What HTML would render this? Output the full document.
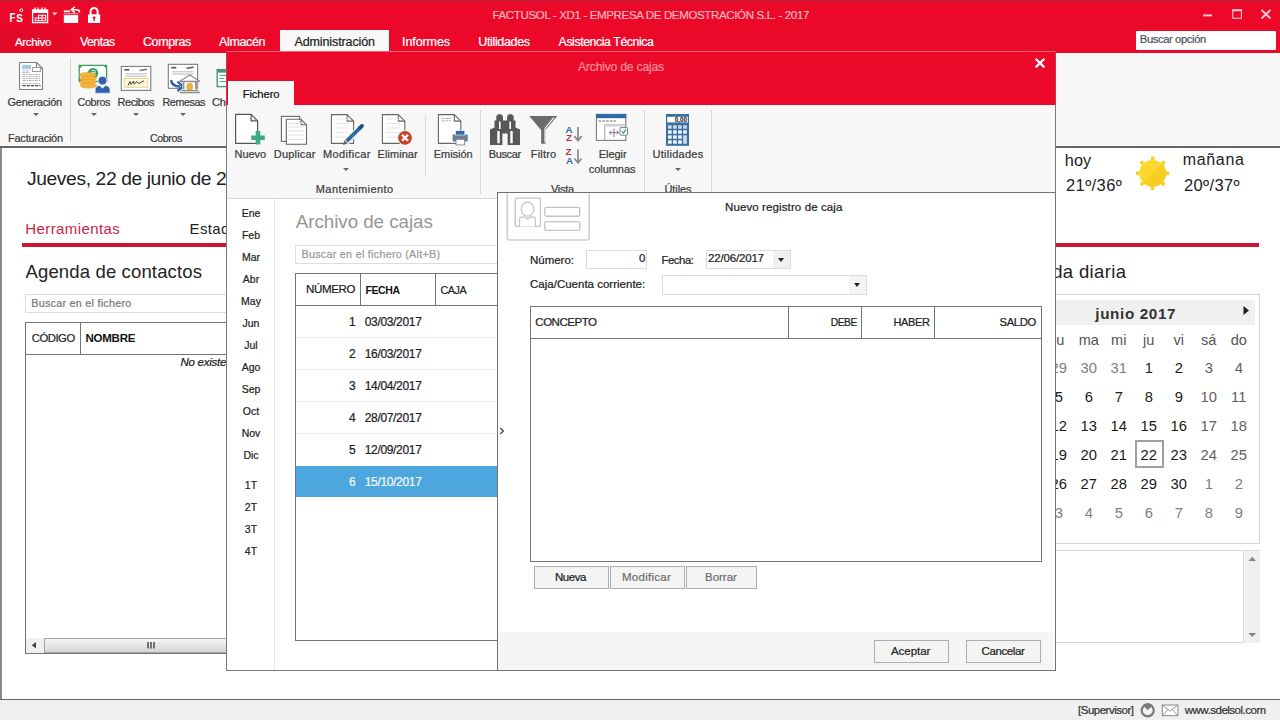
<!DOCTYPE html>
<html lang="es"><head><meta charset="utf-8"><title>FACTUSOL</title>
<style>
*{box-sizing:border-box;margin:0;padding:0}
html,body{width:1280px;height:720px;overflow:hidden;background:#fff}
body{font-family:"Liberation Sans",sans-serif;font-size:12px;color:#222;position:relative}
.a{position:absolute}
.t{position:absolute;white-space:nowrap;line-height:1;-webkit-text-stroke:0.22px currentColor}
.L{position:absolute;left:0;top:0;width:1280px;height:720px;overflow:hidden}
.arr{position:absolute;width:0;height:0;border-left:3px solid transparent;border-right:3px solid transparent;border-top:3px solid #666}
.btn{position:absolute;background:#f4f4f4;border:1px solid #adadad}
svg{position:absolute;overflow:visible}
</style></head><body>

<!-- ===== layer 0: main window ===== -->
<div class="L">
<div class="a" style="left:0;top:52px;width:1280px;height:95px;background:#f7f7f7"></div>
<div class="a" style="left:0;top:0;width:1280px;height:52.6px;background:#ec0829"></div>
<div class="a" style="left:0;top:0;width:1280px;height:1px;background:#b8203a"></div>
<div class="a" style="left:0;top:1px;width:1280px;height:1px;background:#dc0c2a"></div>
<div class="a" style="left:0;top:30px;width:66px;height:22px;background:#e30a28"></div>
<div class="a" style="left:280px;top:30px;width:108.7px;height:22px;background:#f8f8f8"></div>
<div class="a" style="left:1136px;top:30.5px;width:140.3px;height:19px;background:#fff;border-radius:1px"></div>
<div class="a" style="left:70px;top:58px;width:1px;height:84px;background:#d4d4d4"></div>
<div class="a" style="left:0;top:146.4px;width:1280px;height:1.6px;background:#666"></div>
<div class="a" style="left:0;top:148px;width:2px;height:552px;background:#8a8a8a"></div>
<div class="arr" style="left:32.5px;top:113px"></div>
<div class="arr" style="left:91px;top:113px"></div>
<div class="arr" style="left:133px;top:113px"></div>
<div class="arr" style="left:180px;top:113px"></div>
<!-- red rule -->
<div class="a" style="left:22px;top:243px;width:1237px;height:4px;background:#cd1432"></div>
<!-- left search + table -->
<div class="a" style="left:25px;top:294px;width:300px;height:19px;border:1px solid #dcdcdc;background:#fff"></div>
<div class="a" style="left:25px;top:322px;width:300px;height:332px;border:1px solid #747474;background:#fff"></div>
<div class="a" style="left:25px;top:354px;width:300px;height:1px;background:#747474"></div>
<div class="a" style="left:80px;top:323px;width:1px;height:31px;background:#747474"></div>
<div class="a" style="left:26px;top:638px;width:298px;height:15px;background:#f0f0f0"></div>
<div class="a" style="left:44px;top:638px;width:260px;height:15px;background:linear-gradient(#f7f7f7,#e6e6e6 45%,#d6d6d6);border:1px solid #a4a4a4"></div>
<!-- right: calendar -->
<div class="a" style="left:1000px;top:296px;width:1260px;height:0"></div>
<div class="a" style="left:1040px;top:300px;width:215px;height:25px;background:#f0f0f0"></div>
<div class="a" style="left:1030px;top:294px;width:230px;height:250px;border:1px solid #d6d6d6"></div>
<div class="a" style="left:1135px;top:440px;width:29px;height:28px;border:2px solid #a0a0a0"></div>
<div class="a" style="left:1030px;top:550px;width:229.5px;height:93px;border:1px solid #d8d8d8;border-right:none"></div><div class="a" style="left:1243px;top:551px;width:1px;height:91px;background:#dcdcdc"></div>
<div class="a" style="left:1244px;top:551px;width:15.5px;height:91.5px;background:#f0f0f0"></div>
<!-- status bar -->
<div class="a" style="left:0;top:699px;width:1280px;height:21px;background:#f0f0f0;border-top:1px solid #666"></div>
<svg width="1280" height="720" viewBox="0 0 1280 720" style="left:0;top:0">
<text x="9.4" y="21.8" font-family="Liberation Sans,sans-serif" font-size="13" font-weight="bold" fill="#fff" textLength="5.8" lengthAdjust="spacingAndGlyphs">F</text>
<text x="16.3" y="22.2" font-family="Liberation Sans,sans-serif" font-size="11.5" font-weight="bold" fill="#fff" textLength="6.6" lengthAdjust="spacingAndGlyphs">S</text>
<circle cx="21.4" cy="10.2" r="1.4" fill="none" stroke="#fff" stroke-width="1"/>
<rect x="32.6" y="10" width="15" height="12.6" fill="none" stroke="#fff" stroke-width="1.3"/>
<rect x="32.6" y="10" width="15" height="3" fill="#fff"/>
<path d="M35 7.5V11M38 7.5V11M42 7.5V11M45 7.5V11" stroke="#fff" stroke-width="1.2"/>
<path d="M38.5 15.2H45.7V20.8H35.2V18H38.5ZM42 15.2V20.8M38.5 18V20.8M38.5 18H45.7" fill="none" stroke="#fff" stroke-width="1.1"/>
<path d="M52 12.6H57.4L54.7 15.6Z" fill="#fbd0d4"/>
<path d="M63.8 13.5H78.2V23H63.8Z" fill="#fff"/><path d="M63.8 10.5H70V12.2H63.8Z" fill="#fff"/><path d="M63.8 14.6H78.2" stroke="#ec0829" stroke-width="0.9"/>
<path d="M72.5 9.8H77Q79.5 9.8 79.5 12.5" fill="none" stroke="#fff" stroke-width="1.5"/><path d="M74.8 6.8L71.3 9.8L74.8 12.6" fill="none" stroke="#fff" stroke-width="1.5"/>
<rect x="88" y="14.3" width="12.2" height="8.8" rx="0.8" fill="#fff"/>
<path d="M90.6 14.5V11.5A3.5 3.6 0 0 1 97.6 11.5V14.5" fill="none" stroke="#fff" stroke-width="2"/>
<path d="M94.1 16L96.2 18.3H94.8V21H93.4V18.3H92Z" fill="#c8102e"/>
<path d="M1203 15.4H1212" stroke="#f9c6cb" stroke-width="2"/>
<rect x="1232.8" y="10.3" width="8.6" height="8" fill="none" stroke="#f9c6cb" stroke-width="1.1"/><path d="M1232.3 10.2H1241.9" stroke="#f9c6cb" stroke-width="2.2"/>
<path d="M1261.5 10L1270.5 18.5M1270.5 10L1261.5 18.5" stroke="#f9c6cb" stroke-width="2"/>
<path d="M19.5 62.5H36.5L42.5 68.5V89.5H19.5Z" fill="#fff" stroke="#808080" stroke-width="1.1" stroke-linejoin="round"/><path d="M36.5 62.5V68.5H42.5" fill="none" stroke="#808080" stroke-width="1.1" stroke-linejoin="round"/>
<rect x="22" y="65" width="9" height="4.2" fill="#9ecbe8"/>
<rect x="32.3" y="67.6" width="8" height="4" fill="#fff" stroke="#8a8a8a" stroke-width="0.8"/>
<path d="M22.5 70.8H30M22.5 72.6H30" stroke="#9a9a9a" stroke-width="0.8" stroke-dasharray="2.5 1"/>
<path d="M22.5 74.6H40.5M22.5 76.6H40.5M22.5 78.6H40.5M22.5 80.6H40.5M22.5 83.4H40.5" stroke="#9a9a9a" stroke-width="0.8" stroke-dasharray="3 0.8 1.5 0.8"/>
<path d="M22.5 85.6H40.5" stroke="#444" stroke-width="1.1" stroke-dasharray="3.2 1"/>
<rect x="79.2" y="65.4" width="27.4" height="16" fill="#fff" stroke="#3f9b63" stroke-width="1.3"/>
<path d="M79 65.2h4l-4 4ZM107 65.2h-4l4 4ZM79 81.7h4l-4 -4Z" fill="#3f9b63"/>
<circle cx="93" cy="73.2" r="5.2" fill="#2f9e5e"/><path d="M91.5 70.5H95V76M91 72.5H95M91 74.5H95" stroke="#e8f5ec" stroke-width="0.9" fill="none"/>
<ellipse cx="87.5" cy="75" rx="8.2" ry="2.6" fill="#f2b43c" stroke="#e09a1e" stroke-width="0.6"/>
<ellipse cx="88.5" cy="78.5" rx="8.2" ry="2.6" fill="#f2b43c" stroke="#e09a1e" stroke-width="0.6"/>
<ellipse cx="87.5" cy="82" rx="8.2" ry="2.6" fill="#f2b43c" stroke="#e09a1e" stroke-width="0.6"/>
<ellipse cx="88.5" cy="85.5" rx="8.2" ry="2.6" fill="#f2b43c" stroke="#e09a1e" stroke-width="0.6"/>
<circle cx="102.5" cy="80.6" r="4.4" fill="#2f62a8" stroke="#f7f7f7" stroke-width="0.8"/>
<path d="M95.2 93.2V90Q95.2 86 99.5 85.5L102.5 88.2L105.5 85.5Q110 86 110 90V93.2Z" fill="#2f62a8" stroke="#f7f7f7" stroke-width="0.6"/>
<rect x="121.3" y="66.4" width="29.5" height="24" fill="#fff" stroke="#7c7c7c" stroke-width="1.1"/><path d="M124.3 69.80000000000001H129.3" stroke="#555" stroke-width="1.6"/><path d="M139.8 70.4L146.8 69.4" stroke="#555" stroke-width="1.4"/><path d="M125.3 73.9H146.8M125.3 76.2H146.8" stroke="#9a9a9a" stroke-width="0.7"/>
<rect x="124.3" y="78.3" width="23.5" height="9" fill="#fdf6d8" stroke="#e8cf7a" stroke-width="0.8"/>
<path d="M128 85.5L130 81.5L131 84.5L133.5 81L134 84L137 81.5L138.5 83.5L144 80.8" fill="none" stroke="#333" stroke-width="0.9"/>
<rect x="168.3" y="64.3" width="29.3" height="24" fill="#fff" stroke="#7c7c7c" stroke-width="1.1"/><path d="M171.3 67.7H176.3" stroke="#555" stroke-width="1.6"/><path d="M186.60000000000002 68.3L193.60000000000002 67.3" stroke="#555" stroke-width="1.4"/><path d="M172.3 71.8H193.60000000000002M172.3 74.1H193.60000000000002" stroke="#9a9a9a" stroke-width="0.7"/>
<path d="M171 80Q172 86.5 180 86.5" fill="none" stroke="#2f62a8" stroke-width="2.4"/><path d="M177.5 81.5L182.8 86.5L177.5 91.2" fill="none" stroke="#2f62a8" stroke-width="2.4"/>
<path d="M180 92.4H199.8M181.5 90.2H198.3" stroke="#8a8a8a" stroke-width="1.5"/>
<path d="M179.8 81.2L189.8 75L199.8 81.2Z" fill="#fff" stroke="#8a8a8a" stroke-width="1.1" stroke-linejoin="round"/>
<rect x="182.3" y="82" width="15" height="8" fill="#fff"/>
<path d="M183.5 82V89.5M196 82V89.5" stroke="#9a9a9a" stroke-width="2"/>
<rect x="187" y="83.5" width="5.4" height="6.5" rx="1.6" fill="#e3b94a" stroke="#c89a2e" stroke-width="0.7"/>
<path d="M181 81.6H198.6" stroke="#8a8a8a" stroke-width="1.1"/>
<rect x="217.2" y="69.6" width="22" height="17" fill="#fff" stroke="#4a9a78" stroke-width="1.4"/><rect x="217.2" y="69.6" width="22" height="3" fill="#4a9a78"/>
<path d="M219.5 75.5H226M219.5 78.5H224M219.5 81.5H226" stroke="#4a9a78" stroke-width="0.9"/>
<path d="M36 642L31.8 645.3L36 648.6Z" fill="#444"/>
<path d="M148 642V648.4M151 642V648.4M154 642V648.4" stroke="#555" stroke-width="1.6"/>
<path d="M1243.5 306L1249 310.5L1243.5 315Z" fill="#222"/>
<path d="M1248.4 561L1252.2 556.8L1256 561Z" fill="#858585"/><path d="M1248.4 632.9L1252.2 637.1L1256 632.9Z" fill="#858585"/>
<rect x="1165.70" y="171.50" width="3.6" height="3.6" fill="#f7cf2a" transform="rotate(0.0 1167.50 173.30)"/><rect x="1161.34" y="182.04" width="3.6" height="3.6" fill="#f7cf2a" transform="rotate(45.0 1163.14 183.84)"/><rect x="1150.80" y="186.40" width="3.6" height="3.6" fill="#f7cf2a" transform="rotate(90.0 1152.60 188.20)"/><rect x="1140.26" y="182.04" width="3.6" height="3.6" fill="#f7cf2a" transform="rotate(135.0 1142.06 183.84)"/><rect x="1135.90" y="171.50" width="3.6" height="3.6" fill="#f7cf2a" transform="rotate(180.0 1137.70 173.30)"/><rect x="1140.26" y="160.96" width="3.6" height="3.6" fill="#f7cf2a" transform="rotate(225.0 1142.06 162.76)"/><rect x="1150.80" y="156.60" width="3.6" height="3.6" fill="#f7cf2a" transform="rotate(270.0 1152.60 158.40)"/><rect x="1161.34" y="160.96" width="3.6" height="3.6" fill="#f7cf2a" transform="rotate(315.0 1163.14 162.76)"/>
<circle cx="1152.6" cy="173.3" r="13.4" fill="#fbd82e"/>
<path d="M1162.1 163.8A13.4 13.4 0 0 1 1143.1 182.8Z" fill="#f6cd22"/>
<circle cx="1147.7" cy="710.4" r="6" fill="#f0f0f0" stroke="#7a7a7a" stroke-width="2.2"/>
<path d="M1142.6 705.2Q1147.7 701.2 1152.8 705.2L1147.7 710Z" fill="#7a7a7a"/>
<path d="M1143.5 704L1147.7 708.5L1152 704" fill="none" stroke="#f0f0f0" stroke-width="0"/>
<rect x="1162.3" y="705" width="15.6" height="10.6" fill="#fff" stroke="#8a8a8a" stroke-width="1"/><path d="M1162.3 705L1170.1 711L1177.9 705M1162.3 715.6L1168 709.5M1177.9 715.6L1172.2 709.5" fill="none" stroke="#8a8a8a" stroke-width="0.9"/>
</svg>
<div class="t" style="left:492.50px;top:10.27px;font-size:11.5px;color:#f6b6bc;letter-spacing:-0.345px;">FACTUSOL - XD1 - EMPRESA DE DEMOSTRACIÓN S.L. - 2017</div>
<div class="t" style="left:15.00px;top:36.87px;font-size:11.5px;color:#fff;letter-spacing:-0.325px;">Archivo</div>
<div class="t" style="left:80.00px;top:36.23px;font-size:12.25px;color:#fff;letter-spacing:-0.467px;">Ventas</div>
<div class="t" style="left:143.00px;top:36.02px;font-size:12.5px;color:#fff;letter-spacing:-0.410px;">Compras</div>
<div class="t" style="left:219.00px;top:36.02px;font-size:12.5px;color:#fff;letter-spacing:-0.363px;">Almacén</div>
<div class="t" style="left:294.50px;top:36.02px;font-size:12.5px;color:#222;letter-spacing:-0.117px;">Administración</div>
<div class="t" style="left:402.00px;top:36.02px;font-size:12.5px;color:#fff;letter-spacing:-0.082px;">Informes</div>
<div class="t" style="left:478.20px;top:36.02px;font-size:12.5px;color:#fff;letter-spacing:-0.338px;">Utilidades</div>
<div class="t" style="left:558.60px;top:36.23px;font-size:12.25px;color:#fff;letter-spacing:-0.389px;">Asistencia Técnica</div>
<div class="t" style="left:1139.80px;top:34.28px;font-size:11.25px;color:#4a5560;letter-spacing:-0.403px;">Buscar opción</div>
<div class="t" style="left:7.50px;top:96.69px;font-size:11px;color:#3a3a3a;letter-spacing:-0.250px;">Generación</div>
<div class="t" style="left:77.50px;top:96.90px;font-size:10.75px;color:#3a3a3a;letter-spacing:-0.356px;">Cobros</div>
<div class="t" style="left:117.50px;top:96.69px;font-size:11px;color:#3a3a3a;letter-spacing:-0.457px;">Recibos</div>
<div class="t" style="left:162.50px;top:96.90px;font-size:10.75px;color:#3a3a3a;letter-spacing:-0.422px;">Remesas</div>
<div class="t" style="left:212.00px;top:96.69px;font-size:11px;color:#3a3a3a;letter-spacing:-0.255px;">Cheques</div>
<div class="t" style="left:8.00px;top:132.69px;font-size:11px;color:#3a3a3a;letter-spacing:-0.235px;">Facturación</div>
<div class="t" style="left:150.00px;top:132.90px;font-size:10.75px;color:#3a3a3a;letter-spacing:-0.456px;">Cobros</div>
<div class="t" style="left:27.00px;top:168.70px;font-size:19.25px;color:#222;letter-spacing:-0.391px;-webkit-text-stroke:0;">Jueves, 22 de junio de 2017</div>
<div class="t" style="left:25.25px;top:221.30px;font-size:15px;color:#cb1f45;letter-spacing:0.402px;-webkit-text-stroke:0;">Herramientas</div>
<div class="t" style="left:189.60px;top:221.30px;font-size:15px;color:#222;letter-spacing:0.346px;-webkit-text-stroke:0;">Estado</div>
<div class="t" style="left:25.50px;top:262.74px;font-size:18.5px;color:#222;letter-spacing:0.146px;-webkit-text-stroke:0;">Agenda de contactos</div>
<div class="t" style="left:1007.62px;top:262.74px;font-size:18.5px;color:#222;letter-spacing:0.350px;-webkit-text-stroke:0;">Agenda diaria</div>
<div class="t" style="left:31.30px;top:297.90px;font-size:10.75px;color:#777;letter-spacing:0.262px;">Buscar en el fichero</div>
<div class="t" style="left:31.70px;top:333.48px;font-size:11.25px;color:#222;letter-spacing:-0.435px;">CÓDIGO</div>
<div class="t" style="left:85.40px;top:333.27px;font-size:11.5px;color:#111;letter-spacing:-0.208px;font-weight:bold;-webkit-text-stroke:0;">NOMBRE</div>
<div class="t" style="left:180.40px;top:357.07px;font-size:11.5px;color:#222;letter-spacing:-0.243px;font-style:italic;">No existen registros</div>
<div class="t" style="left:1064.80px;top:152.04px;font-size:16.25px;color:#222;letter-spacing:0.063px;-webkit-text-stroke:0;">hoy</div>
<div class="t" style="left:1066.00px;top:177.03px;font-size:16.5px;color:#222;letter-spacing:0.397px;-webkit-text-stroke:0;">21º/36º</div>
<div class="t" style="left:1182.75px;top:152.26px;font-size:16px;color:#222;letter-spacing:0.666px;-webkit-text-stroke:0;">mañana</div>
<div class="t" style="left:1184.00px;top:177.03px;font-size:16.5px;color:#222;letter-spacing:0.381px;-webkit-text-stroke:0;">20º/37º</div>
<div class="t" style="left:1095.30px;top:306.09px;font-size:15.25px;color:#333;letter-spacing:0.622px;font-weight:bold;-webkit-text-stroke:0;">junio 2017</div>
<div class="t" style="left:1053.11px;top:332.73px;font-size:14.5px;color:#555;-webkit-text-stroke:0;">lu</div>
<div class="t" style="left:1078.68px;top:332.73px;font-size:14.5px;color:#555;-webkit-text-stroke:0;">ma</div>
<div class="t" style="left:1111.10px;top:332.73px;font-size:14.5px;color:#555;-webkit-text-stroke:0;">mi</div>
<div class="t" style="left:1143.11px;top:332.73px;font-size:14.5px;color:#555;-webkit-text-stroke:0;">ju</div>
<div class="t" style="left:1173.51px;top:332.73px;font-size:14.5px;color:#555;-webkit-text-stroke:0;">vi</div>
<div class="t" style="left:1201.09px;top:332.73px;font-size:14.5px;color:#555;-webkit-text-stroke:0;">sá</div>
<div class="t" style="left:1230.69px;top:332.73px;font-size:14.5px;color:#555;-webkit-text-stroke:0;">do</div>
<div class="t" style="left:1050.55px;top:361.31px;font-size:14.75px;color:#808080;-webkit-text-stroke:0;">29</div>
<div class="t" style="left:1080.55px;top:361.31px;font-size:14.75px;color:#808080;-webkit-text-stroke:0;">30</div>
<div class="t" style="left:1110.55px;top:361.31px;font-size:14.75px;color:#808080;-webkit-text-stroke:0;">31</div>
<div class="t" style="left:1144.65px;top:361.31px;font-size:14.75px;color:#1a1a1a;-webkit-text-stroke:0;">1</div>
<div class="t" style="left:1174.65px;top:361.31px;font-size:14.75px;color:#1a1a1a;-webkit-text-stroke:0;">2</div>
<div class="t" style="left:1204.65px;top:361.31px;font-size:14.75px;color:#606060;-webkit-text-stroke:0;">3</div>
<div class="t" style="left:1234.65px;top:361.31px;font-size:14.75px;color:#606060;-webkit-text-stroke:0;">4</div>
<div class="t" style="left:1054.65px;top:390.31px;font-size:14.75px;color:#1a1a1a;-webkit-text-stroke:0;">5</div>
<div class="t" style="left:1084.65px;top:390.31px;font-size:14.75px;color:#1a1a1a;-webkit-text-stroke:0;">6</div>
<div class="t" style="left:1114.65px;top:390.31px;font-size:14.75px;color:#1a1a1a;-webkit-text-stroke:0;">7</div>
<div class="t" style="left:1144.65px;top:390.31px;font-size:14.75px;color:#1a1a1a;-webkit-text-stroke:0;">8</div>
<div class="t" style="left:1174.65px;top:390.31px;font-size:14.75px;color:#1a1a1a;-webkit-text-stroke:0;">9</div>
<div class="t" style="left:1200.55px;top:390.31px;font-size:14.75px;color:#606060;-webkit-text-stroke:0;">10</div>
<div class="t" style="left:1231.09px;top:390.31px;font-size:14.75px;color:#606060;-webkit-text-stroke:0;">11</div>
<div class="t" style="left:1050.55px;top:419.31px;font-size:14.75px;color:#1a1a1a;-webkit-text-stroke:0;">12</div>
<div class="t" style="left:1080.55px;top:419.31px;font-size:14.75px;color:#1a1a1a;-webkit-text-stroke:0;">13</div>
<div class="t" style="left:1110.55px;top:419.31px;font-size:14.75px;color:#1a1a1a;-webkit-text-stroke:0;">14</div>
<div class="t" style="left:1140.55px;top:419.31px;font-size:14.75px;color:#1a1a1a;-webkit-text-stroke:0;">15</div>
<div class="t" style="left:1170.55px;top:419.31px;font-size:14.75px;color:#1a1a1a;-webkit-text-stroke:0;">16</div>
<div class="t" style="left:1200.55px;top:419.31px;font-size:14.75px;color:#606060;-webkit-text-stroke:0;">17</div>
<div class="t" style="left:1230.55px;top:419.31px;font-size:14.75px;color:#606060;-webkit-text-stroke:0;">18</div>
<div class="t" style="left:1050.55px;top:448.31px;font-size:14.75px;color:#1a1a1a;-webkit-text-stroke:0;">19</div>
<div class="t" style="left:1080.55px;top:448.31px;font-size:14.75px;color:#1a1a1a;-webkit-text-stroke:0;">20</div>
<div class="t" style="left:1110.55px;top:448.31px;font-size:14.75px;color:#1a1a1a;-webkit-text-stroke:0;">21</div>
<div class="t" style="left:1140.55px;top:448.31px;font-size:14.75px;color:#1a1a1a;-webkit-text-stroke:0;">22</div>
<div class="t" style="left:1170.55px;top:448.31px;font-size:14.75px;color:#1a1a1a;-webkit-text-stroke:0;">23</div>
<div class="t" style="left:1200.55px;top:448.31px;font-size:14.75px;color:#606060;-webkit-text-stroke:0;">24</div>
<div class="t" style="left:1230.55px;top:448.31px;font-size:14.75px;color:#606060;-webkit-text-stroke:0;">25</div>
<div class="t" style="left:1050.55px;top:477.31px;font-size:14.75px;color:#1a1a1a;-webkit-text-stroke:0;">26</div>
<div class="t" style="left:1080.55px;top:477.31px;font-size:14.75px;color:#1a1a1a;-webkit-text-stroke:0;">27</div>
<div class="t" style="left:1110.55px;top:477.31px;font-size:14.75px;color:#1a1a1a;-webkit-text-stroke:0;">28</div>
<div class="t" style="left:1140.55px;top:477.31px;font-size:14.75px;color:#1a1a1a;-webkit-text-stroke:0;">29</div>
<div class="t" style="left:1170.55px;top:477.31px;font-size:14.75px;color:#1a1a1a;-webkit-text-stroke:0;">30</div>
<div class="t" style="left:1204.65px;top:477.31px;font-size:14.75px;color:#808080;-webkit-text-stroke:0;">1</div>
<div class="t" style="left:1234.65px;top:477.31px;font-size:14.75px;color:#808080;-webkit-text-stroke:0;">2</div>
<div class="t" style="left:1054.65px;top:506.31px;font-size:14.75px;color:#808080;-webkit-text-stroke:0;">3</div>
<div class="t" style="left:1084.65px;top:506.31px;font-size:14.75px;color:#808080;-webkit-text-stroke:0;">4</div>
<div class="t" style="left:1114.65px;top:506.31px;font-size:14.75px;color:#808080;-webkit-text-stroke:0;">5</div>
<div class="t" style="left:1144.65px;top:506.31px;font-size:14.75px;color:#808080;-webkit-text-stroke:0;">6</div>
<div class="t" style="left:1174.65px;top:506.31px;font-size:14.75px;color:#808080;-webkit-text-stroke:0;">7</div>
<div class="t" style="left:1204.65px;top:506.31px;font-size:14.75px;color:#808080;-webkit-text-stroke:0;">8</div>
<div class="t" style="left:1234.65px;top:506.31px;font-size:14.75px;color:#808080;-webkit-text-stroke:0;">9</div>
<div class="t" style="left:1078.00px;top:705.27px;font-size:11.5px;color:#333;letter-spacing:-0.492px;">[Supervisor]</div>
<div class="t" style="left:1184.75px;top:705.27px;font-size:11.5px;color:#333;letter-spacing:-0.497px;">www.sdelsol.com</div>
</div>

<!-- ===== layer 1: Archivo de cajas ===== -->
<div class="L">
<div class="a" style="left:226px;top:52px;width:830px;height:619px;background:#fff;border:1px solid #7a7a7a;border-top:none"></div>
<div class="a" style="left:226px;top:51px;width:830px;height:53.5px;background:#ec0829;border-left:1px solid #c23a4e;border-right:1px solid #c23a4e"></div>
<div class="a" style="left:227px;top:51px;width:828px;height:1px;background:#ef5f72"></div>
<div class="a" style="left:228.4px;top:81px;width:65.3px;height:24px;background:#f7f7f7"></div>
<div class="a" style="left:227px;top:105px;width:828px;height:93px;background:#f7f7f7"></div>
<div class="a" style="left:227px;top:198px;width:828px;height:1px;background:#d8d8d8"></div>
<div class="a" style="left:425px;top:116px;width:1px;height:60px;background:#d8d8d8"></div>
<div class="a" style="left:480px;top:110px;width:1px;height:84px;background:#d8d8d8"></div>
<div class="a" style="left:644px;top:110px;width:1px;height:84px;background:#d8d8d8"></div>
<div class="a" style="left:711px;top:110px;width:1px;height:84px;background:#d8d8d8"></div>
<div class="arr" style="left:343px;top:168px"></div>
<div class="arr" style="left:674.5px;top:168px"></div>
<!-- month sidebar -->
<div class="a" style="left:227px;top:199px;width:47px;height:471px;background:#fff"></div>
<div class="a" style="left:274px;top:199px;width:1px;height:471px;background:#e4e4e4"></div>
<!-- search -->
<div class="a" style="left:295px;top:245px;width:400px;height:19px;border:1px solid #dcdcdc;background:#fff"></div>
<!-- table -->
<div class="a" style="left:295px;top:273px;width:400px;height:368px;border:1px solid #747474;background:#fff"></div>
<div class="a" style="left:295px;top:305px;width:400px;height:1px;background:#747474"></div>
<div class="a" style="left:360px;top:274px;width:1px;height:31px;background:#747474"></div>
<div class="a" style="left:435px;top:274px;width:1px;height:31px;background:#747474"></div>
<div class="a" style="left:296px;top:337px;width:398px;height:1px;background:#ececec"></div>
<div class="a" style="left:296px;top:369px;width:398px;height:1px;background:#ececec"></div>
<div class="a" style="left:296px;top:401px;width:398px;height:1px;background:#ececec"></div>
<div class="a" style="left:296px;top:433px;width:398px;height:1px;background:#ececec"></div>
<div class="a" style="left:296px;top:466px;width:398px;height:31px;background:#4ea6de"></div>
<svg width="1280" height="720" viewBox="0 0 1280 720" style="left:0;top:0">
<path d="M1035.6 58.8L1044.4 67.4M1044.4 58.8L1035.6 67.4" stroke="#fff" stroke-width="2.2"/>
<path d="M235.6 114.4H251.10000000000002L257.6 120.9V143.4H235.6Z" fill="#fff" stroke="#555" stroke-width="1.2" stroke-linejoin="round"/><path d="M251.10000000000002 114.4V120.9H257.6" fill="none" stroke="#555" stroke-width="1.2" stroke-linejoin="round"/>
<path d="M258 131V144.6M251.2 137.8H264.8" stroke="#3fa98c" stroke-width="4.6"/>
<rect x="281.4" y="116.4" width="18.2" height="25" fill="#fff" stroke="#666" stroke-width="1.1"/>
<path d="M286.3 119.3H301.0L306.5 124.8V144.3H286.3Z" fill="#fff" stroke="#666" stroke-width="1.1" stroke-linejoin="round"/><path d="M301.0 119.3V124.8H306.5" fill="none" stroke="#666" stroke-width="1.1" stroke-linejoin="round"/>
<path d="M288.5 123.5H303.5" stroke="#dcdcdc" stroke-width="0.9"/><path d="M288.5 127H303.5" stroke="#dcdcdc" stroke-width="0.9"/><path d="M288.5 131H303.5" stroke="#dcdcdc" stroke-width="0.9"/><path d="M288.5 135H303.5" stroke="#dcdcdc" stroke-width="0.9"/><path d="M288.5 139.5H303.5" stroke="#dcdcdc" stroke-width="0.9"/>
<path d="M331.4 114.6H347.09999999999997L353.59999999999997 121.1V143.4H331.4Z" fill="#fff" stroke="#666" stroke-width="1.1" stroke-linejoin="round"/><path d="M347.09999999999997 114.6V121.1H353.59999999999997" fill="none" stroke="#666" stroke-width="1.1" stroke-linejoin="round"/>
<path d="M335 119H349" stroke="#e2e2e2" stroke-width="0.9"/><path d="M335 123.5H349" stroke="#e2e2e2" stroke-width="0.9"/><path d="M335 128H349" stroke="#e2e2e2" stroke-width="0.9"/><path d="M335 132.5H349" stroke="#e2e2e2" stroke-width="0.9"/><path d="M335 137H349" stroke="#e2e2e2" stroke-width="0.9"/>
<path d="M345 143.3L361.2 127" stroke="#f7f7f7" stroke-width="6.5"/><path d="M346.6 141.2L360.3 127.6" stroke="#2e6aa3" stroke-width="3.8" stroke-linecap="butt"/><path d="M360.3 127.6L362 125.9" stroke="#1f4f80" stroke-width="3.8" stroke-linecap="round"/><path d="M343 145L344.4 140.2L347.9 143.6Z" fill="#666"/>
<path d="M382.4 114.6H398.29999999999995L404.79999999999995 121.1V143.4H382.4Z" fill="#fff" stroke="#666" stroke-width="1.1" stroke-linejoin="round"/><path d="M398.29999999999995 114.6V121.1H404.79999999999995" fill="none" stroke="#666" stroke-width="1.1" stroke-linejoin="round"/>
<path d="M386 119H400" stroke="#e2e2e2" stroke-width="0.9"/><path d="M386 123.5H400" stroke="#e2e2e2" stroke-width="0.9"/><path d="M386 128H400" stroke="#e2e2e2" stroke-width="0.9"/><path d="M386 132.5H400" stroke="#e2e2e2" stroke-width="0.9"/><path d="M386 137H400" stroke="#e2e2e2" stroke-width="0.9"/>
<circle cx="405" cy="137.8" r="7.6" fill="#f7f7f7"/><circle cx="405" cy="137.8" r="6.9" fill="#c4412b"/><path d="M402 134.8L408 140.8M408 134.8L402 140.8" stroke="#fff" stroke-width="2.3"/>
<path d="M438.4 114.6H454.29999999999995L460.79999999999995 121.1V143.4H438.4Z" fill="#fff" stroke="#666" stroke-width="1.1" stroke-linejoin="round"/><path d="M454.29999999999995 114.6V121.1H460.79999999999995" fill="none" stroke="#666" stroke-width="1.1" stroke-linejoin="round"/>
<path d="M441.5 118.5H451M441.5 120.8H451" stroke="#9a9a9a" stroke-width="0.8" stroke-dasharray="3 0.8"/>
<rect x="451.5" y="133.6" width="17" height="9" fill="#f7f7f7"/><rect x="452.6" y="134.4" width="15.2" height="7" rx="0.8" fill="#6b7f93"/><rect x="455.6" y="130.6" width="9.2" height="4.4" fill="#2e6aa3" stroke="#f7f7f7" stroke-width="0.6"/><rect x="456" y="139.3" width="8.6" height="5.6" fill="#fff" stroke="#7a8795" stroke-width="0.9"/>
<path d="M490 145V129.5L494.5 127.5V120.5H496.3V115.6H497.6V114.2H501.6V115.6H502.9V120.5H507.1V115.6H508.4V114.2H512.4V115.6H513.7V120.5H515.5V127.5L520 129.5V145H507.6V133.5H502.4V145Z" fill="#585858"/>
<path d="M497.3 131V143.3H499.7V131ZM510.3 131V143.3H512.7V131ZM499 121.5V129H500.6V121.5ZM509.4 121.5V129H511V121.5Z" fill="#fff"/>
<path d="M529.2 116H557.3L545.4 130.3V143.8H541.2V130.3Z" fill="#6c6c6c"/><path d="M553.8 117.6L545 128.5V142.3" fill="none" stroke="#fff" stroke-width="1.1"/>
<text x="565.6" y="132.6" font-family="Liberation Sans,sans-serif" font-size="9.8" font-weight="bold" fill="#2e6aa3">A</text><text x="565.9" y="141.2" font-family="Liberation Sans,sans-serif" font-size="9.8" font-weight="bold" fill="#b03a4a">Z</text><path d="M578 127.1V140.1M574.4 136.1L578 140.6L581.6 136.1" fill="none" stroke="#8a8a8a" stroke-width="1.7"/>
<text x="565.6" y="155" font-family="Liberation Sans,sans-serif" font-size="9.8" font-weight="bold" fill="#b03a4a">Z</text><text x="565.9" y="163.6" font-family="Liberation Sans,sans-serif" font-size="9.8" font-weight="bold" fill="#2e6aa3">A</text><path d="M578 149.5V162.5M574.4 158.5L578 163L581.6 158.5" fill="none" stroke="#8a8a8a" stroke-width="1.7"/>
<rect x="596.4" y="114.4" width="29.4" height="26" fill="#fff" stroke="#7a7a7a" stroke-width="1.1"/><rect x="596" y="114" width="30.2" height="4.2" fill="#2e6aa3"/>
<path d="M598.5 121H616" stroke="#666" stroke-width="1" stroke-dasharray="2.6 1.2"/><path d="M604.8 124.5V140.2M604.8 124.8H625.6" stroke="#9a9a9a" stroke-width="0.9"/><rect x="605.3" y="124.4" width="20" height="2.2" fill="#d4d4d4"/>
<path d="M614 128.5V137M609.5 132.6H618.5M611.5 130.6L609.3 132.6L611.5 134.6M616.5 130.6L618.7 132.6L616.5 134.6" fill="none" stroke="#777" stroke-width="0.9"/>
<rect x="620" y="127.6" width="7.6" height="7.6" rx="0.8" fill="#fff" stroke="#6b7f93" stroke-width="1"/><path d="M621.8 131.4L623.4 133.2L626 129.4" fill="none" stroke="#2f8a6a" stroke-width="1.1"/>
<rect x="666" y="114" width="23" height="31.8" fill="#3a6fa0"/><rect x="667.2" y="116.8" width="20.6" height="5.6" fill="#fff"/>
<text x="687.2" y="122" text-anchor="end" font-family="Liberation Sans,sans-serif" font-size="6.4" font-weight="bold" fill="#111">0,00</text>
<rect x="668.00" y="125.20" width="3.7" height="3.6" rx="0.6" fill="#cdd9e6"/>
<rect x="673.05" y="125.20" width="3.7" height="3.6" rx="0.6" fill="#cdd9e6"/>
<rect x="678.10" y="125.20" width="3.7" height="3.6" rx="0.6" fill="#cdd9e6"/>
<rect x="683.15" y="125.20" width="3.7" height="3.6" rx="0.6" fill="#cdd9e6"/>
<rect x="668.00" y="130.20" width="3.7" height="3.6" rx="0.6" fill="#eef6fd"/>
<rect x="673.05" y="130.20" width="3.7" height="3.6" rx="0.6" fill="#eef6fd"/>
<rect x="678.10" y="130.20" width="3.7" height="3.6" rx="0.6" fill="#eef6fd"/>
<rect x="683.15" y="130.20" width="3.7" height="3.6" rx="0.6" fill="#eef6fd"/>
<rect x="668.00" y="135.20" width="3.7" height="3.6" rx="0.6" fill="#eef6fd"/>
<rect x="673.05" y="135.20" width="3.7" height="3.6" rx="0.6" fill="#eef6fd"/>
<rect x="678.10" y="135.20" width="3.7" height="3.6" rx="0.6" fill="#eef6fd"/>
<rect x="683.15" y="135.20" width="3.7" height="8.6" rx="0.6" fill="#cdd9e6"/>
<rect x="668.00" y="140.20" width="3.7" height="3.6" rx="0.6" fill="#eef6fd"/>
<rect x="673.05" y="140.20" width="3.7" height="3.6" rx="0.6" fill="#eef6fd"/>
<rect x="678.10" y="140.20" width="3.7" height="3.6" rx="0.6" fill="#eef6fd"/>

</svg>
<div class="t" style="left:578.00px;top:60.63px;font-size:12.25px;color:#f48f9a;letter-spacing:-0.250px;">Archivo de cajas</div>
<div class="t" style="left:242.70px;top:88.78px;font-size:11.25px;color:#111;letter-spacing:-0.109px;">Fichero</div>
<div class="t" style="left:234.50px;top:148.69px;font-size:11px;color:#3a3a3a;letter-spacing:-0.045px;">Nuevo</div>
<div class="t" style="left:273.75px;top:148.69px;font-size:11px;color:#3a3a3a;letter-spacing:0.188px;">Duplicar</div>
<div class="t" style="left:323.00px;top:148.69px;font-size:11px;color:#3a3a3a;letter-spacing:0.349px;">Modificar</div>
<div class="t" style="left:377.50px;top:148.69px;font-size:11px;color:#3a3a3a;letter-spacing:0.062px;">Eliminar</div>
<div class="t" style="left:433.75px;top:148.69px;font-size:11px;color:#3a3a3a;letter-spacing:-0.043px;">Emisión</div>
<div class="t" style="left:488.75px;top:148.69px;font-size:11px;color:#3a3a3a;letter-spacing:-0.364px;">Buscar</div>
<div class="t" style="left:530.75px;top:148.69px;font-size:11px;color:#3a3a3a;letter-spacing:0.185px;">Filtro</div>
<div class="t" style="left:598.75px;top:148.69px;font-size:11px;color:#3a3a3a;letter-spacing:-0.042px;">Elegir</div>
<div class="t" style="left:588.75px;top:163.69px;font-size:11px;color:#3a3a3a;letter-spacing:-0.047px;">columnas</div>
<div class="t" style="left:652.50px;top:148.69px;font-size:11px;color:#3a3a3a;letter-spacing:0.272px;">Utilidades</div>
<div class="t" style="left:315.75px;top:184.19px;font-size:11px;color:#3a3a3a;letter-spacing:0.435px;">Mantenimiento</div>
<div class="t" style="left:551.00px;top:184.19px;font-size:11px;color:#3a3a3a;letter-spacing:-0.285px;">Vista</div>
<div class="t" style="left:664.50px;top:184.19px;font-size:11px;color:#3a3a3a;letter-spacing:-0.101px;">Útiles</div>
<div class="t" style="left:241.66px;top:208.11px;font-size:10.5px;color:#1e1e1e;">Ene</div>
<div class="t" style="left:241.95px;top:230.11px;font-size:10.5px;color:#1e1e1e;">Feb</div>
<div class="t" style="left:241.96px;top:252.11px;font-size:10.5px;color:#1e1e1e;">Mar</div>
<div class="t" style="left:242.83px;top:274.11px;font-size:10.5px;color:#1e1e1e;">Abr</div>
<div class="t" style="left:241.08px;top:296.11px;font-size:10.5px;color:#1e1e1e;">May</div>
<div class="t" style="left:242.54px;top:318.11px;font-size:10.5px;color:#1e1e1e;">Jun</div>
<div class="t" style="left:244.29px;top:340.11px;font-size:10.5px;color:#1e1e1e;">Jul</div>
<div class="t" style="left:241.66px;top:362.11px;font-size:10.5px;color:#1e1e1e;">Ago</div>
<div class="t" style="left:241.66px;top:384.11px;font-size:10.5px;color:#1e1e1e;">Sep</div>
<div class="t" style="left:242.83px;top:406.11px;font-size:10.5px;color:#1e1e1e;">Oct</div>
<div class="t" style="left:241.66px;top:428.11px;font-size:10.5px;color:#1e1e1e;">Nov</div>
<div class="t" style="left:243.42px;top:450.11px;font-size:10.5px;color:#1e1e1e;">Dic</div>
<div class="t" style="left:244.87px;top:480.11px;font-size:10.5px;color:#1e1e1e;">1T</div>
<div class="t" style="left:244.87px;top:502.11px;font-size:10.5px;color:#1e1e1e;">2T</div>
<div class="t" style="left:244.87px;top:524.11px;font-size:10.5px;color:#1e1e1e;">3T</div>
<div class="t" style="left:244.87px;top:546.11px;font-size:10.5px;color:#1e1e1e;">4T</div>
<div class="t" style="left:295.75px;top:213.03px;font-size:18.75px;color:#969696;letter-spacing:-0.036px;-webkit-text-stroke:0;">Archivo de cajas</div>
<div class="t" style="left:301.50px;top:248.90px;font-size:10.75px;color:#999;letter-spacing:0.275px;">Buscar en el fichero (Alt+B)</div>
<div class="t" style="left:306.00px;top:284.27px;font-size:11.5px;color:#222;letter-spacing:-0.353px;">NÚMERO</div>
<div class="t" style="left:365.40px;top:285.11px;font-size:10.5px;color:#111;letter-spacing:-0.396px;font-weight:bold;-webkit-text-stroke:0;">FECHA</div>
<div class="t" style="left:440.40px;top:284.90px;font-size:10.75px;color:#222;letter-spacing:-0.403px;">CAJA</div>
<div class="t" style="left:349.00px;top:315.54px;font-size:12px;color:#222;">1</div>
<div class="t" style="left:364.70px;top:315.54px;font-size:12px;color:#222;letter-spacing:-0.321px;">03/03/2017</div>
<div class="t" style="left:349.00px;top:347.54px;font-size:12px;color:#222;">2</div>
<div class="t" style="left:364.70px;top:347.54px;font-size:12px;color:#222;letter-spacing:-0.321px;">16/03/2017</div>
<div class="t" style="left:349.00px;top:379.54px;font-size:12px;color:#222;">3</div>
<div class="t" style="left:364.70px;top:379.54px;font-size:12px;color:#222;letter-spacing:-0.321px;">14/04/2017</div>
<div class="t" style="left:349.00px;top:411.54px;font-size:12px;color:#222;">4</div>
<div class="t" style="left:364.70px;top:411.54px;font-size:12px;color:#222;letter-spacing:-0.321px;">28/07/2017</div>
<div class="t" style="left:349.00px;top:443.54px;font-size:12px;color:#222;">5</div>
<div class="t" style="left:364.70px;top:443.54px;font-size:12px;color:#222;letter-spacing:-0.321px;">12/09/2017</div>
<div class="t" style="left:349.00px;top:475.54px;font-size:12px;color:#f2f9fe;">6</div>
<div class="t" style="left:364.70px;top:475.54px;font-size:12px;color:#f2f9fe;letter-spacing:-0.321px;">15/10/2017</div>
</div>

<!-- ===== layer 2: Nuevo registro de caja ===== -->
<div class="L">
<div class="a" style="left:497px;top:192px;width:559px;height:479px;background:#fff;border:1px solid #727272"></div>
<div class="a" style="left:498px;top:632px;width:555px;height:38px;background:#f5f5f5"></div>
<!-- inputs -->
<div class="a" style="left:586px;top:250px;width:61px;height:19px;border:1px solid #dcdcdc;background:#fff"></div>
<div class="a" style="left:706px;top:250px;width:85px;height:19px;border:1px solid #dcdcdc;background:#fff"></div>
<div class="a" style="left:772.5px;top:251px;width:17.5px;height:17px;background:#f0f0f0"></div>
<div class="arr" style="left:778px;top:258px;border-top-color:#222;border-left-width:3.5px;border-right-width:3.5px;border-top-width:4px"></div>
<div class="a" style="left:662px;top:275px;width:205px;height:20px;border:1px solid #dcdcdc;background:#fff"></div>
<div class="a" style="left:849px;top:276px;width:17px;height:18px;background:#f4f4f4"></div>
<div class="arr" style="left:854px;top:283px;border-top-color:#222;border-left-width:3.5px;border-right-width:3.5px;border-top-width:4px"></div>
<!-- grid -->
<div class="a" style="left:530px;top:306px;width:512px;height:256px;border:1px solid #747474;background:#fff"></div>
<div class="a" style="left:530px;top:338px;width:512px;height:1px;background:#747474"></div>
<div class="a" style="left:788px;top:307px;width:1px;height:31px;background:#747474"></div>
<div class="a" style="left:861px;top:307px;width:1px;height:31px;background:#747474"></div>
<div class="a" style="left:934px;top:307px;width:1px;height:31px;background:#747474"></div>
<!-- buttons -->
<div class="btn" style="left:534px;top:566px;width:75px;height:23px"></div>
<div class="btn" style="left:610px;top:566px;width:75px;height:23px"></div>
<div class="btn" style="left:686px;top:566px;width:71px;height:23px"></div>
<div class="btn" style="left:874px;top:640px;width:75px;height:23px"></div>
<div class="btn" style="left:966px;top:640px;width:75px;height:23px"></div>
<svg width="1280" height="720" viewBox="0 0 1280 720" style="left:0;top:0">
<path d="M507.2 193V238Q507.2 240 509.2 240H587.2Q589.2 240 589.2 238V193" fill="#fff" stroke="#cfcfcf" stroke-width="1.6"/>
<rect x="515.2" y="198.2" width="25.2" height="28.2" rx="1" fill="#fff" stroke="#c4c4c4" stroke-width="1.3"/>
<path d="M519.6 226.4V219Q519.6 217.2 521.4 217.2H525L527.5 219.2L530 217.2H533.6Q535.4 217.2 535.4 219V226.4" fill="#fff" stroke="#c4c4c4" stroke-width="1.2"/>
<ellipse cx="527.5" cy="209.2" rx="6.3" ry="7" fill="#fff" stroke="#c4c4c4" stroke-width="1.2"/>
<rect x="544.8" y="207.4" width="35" height="8.8" rx="1.6" fill="#fff" stroke="#c4c4c4" stroke-width="1.4"/><rect x="544.8" y="221.6" width="35" height="8.8" rx="1.6" fill="#fff" stroke="#c4c4c4" stroke-width="1.4"/>
<path d="M500.3 428L503.3 431L500.3 434" fill="none" stroke="#444" stroke-width="1.3"/>
</svg>
<div class="t" style="left:725.00px;top:202.27px;font-size:11.5px;color:#222;letter-spacing:0.111px;">Nuevo registro de caja</div>
<div class="t" style="left:530.00px;top:254.77px;font-size:11.5px;color:#222;letter-spacing:-0.017px;">Número:</div>
<div class="t" style="left:639.00px;top:253.27px;font-size:11.5px;color:#222;">0</div>
<div class="t" style="left:661.40px;top:254.98px;font-size:11.25px;color:#222;letter-spacing:-0.373px;">Fecha:</div>
<div class="t" style="left:708.00px;top:253.27px;font-size:11.5px;color:#222;letter-spacing:-0.173px;">22/06/2017</div>
<div class="t" style="left:530.00px;top:279.27px;font-size:11.5px;color:#222;letter-spacing:0.006px;">Caja/Cuenta corriente:</div>
<div class="t" style="left:535.30px;top:316.97px;font-size:11.5px;color:#222;letter-spacing:-0.474px;">CONCEPTO</div>
<div class="t" style="left:830.70px;top:318.02px;font-size:10.25px;color:#222;letter-spacing:-0.459px;">DEBE</div>
<div class="t" style="left:893.50px;top:317.39px;font-size:11.0px;color:#222;letter-spacing:-0.364px;">HABER</div>
<div class="t" style="left:999.50px;top:317.18px;font-size:11.25px;color:#222;letter-spacing:-0.347px;">SALDO</div>
<div class="t" style="left:555.00px;top:572.27px;font-size:11.5px;color:#222;letter-spacing:-0.462px;">Nueva</div>
<div class="t" style="left:622.00px;top:572.27px;font-size:11.5px;color:#6d6d6d;letter-spacing:0.272px;">Modificar</div>
<div class="t" style="left:705.00px;top:572.27px;font-size:11.5px;color:#6d6d6d;letter-spacing:-0.024px;">Borrar</div>
<div class="t" style="left:891.00px;top:645.87px;font-size:11.5px;color:#222;letter-spacing:-0.050px;">Aceptar</div>
<div class="t" style="left:981.60px;top:645.87px;font-size:11.5px;color:#222;letter-spacing:-0.399px;">Cancelar</div>
</div>

</body></html>
